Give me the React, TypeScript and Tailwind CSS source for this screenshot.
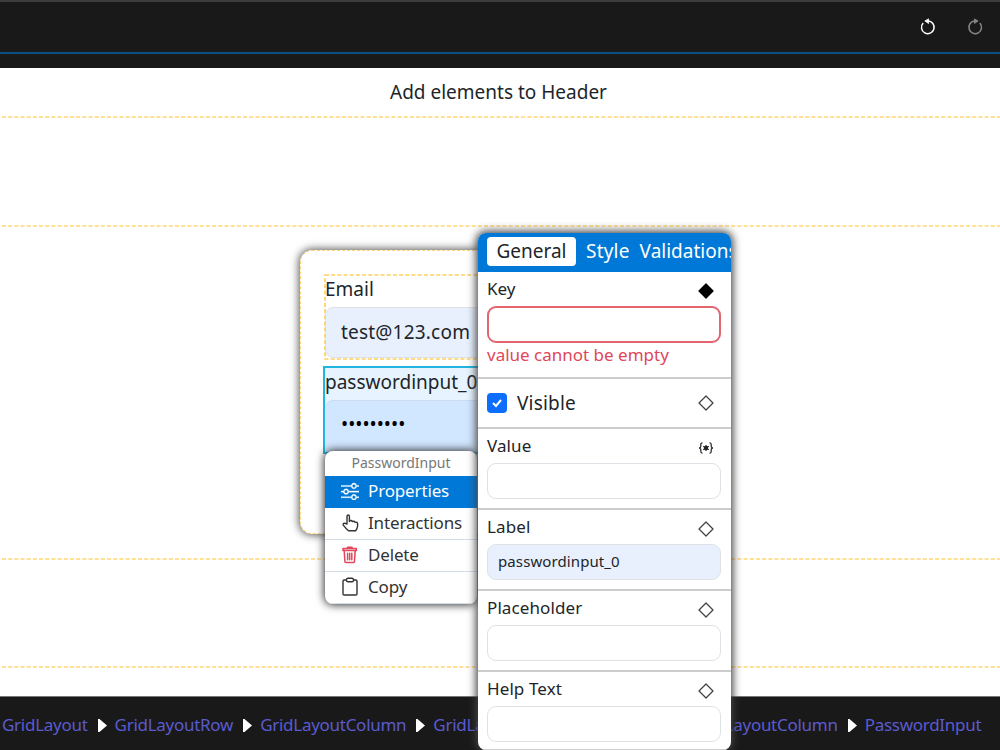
import { clsx } from 'clsx'
import { BsSliders } from 'react-icons/bs'

const Diamond = ({ filled }: { filled?: boolean }) => (
  <svg width="16" height="16" viewBox="0 0 16 16">
    <path d="M8 1 15 8 8 15 1 8Z" fill={filled ? '#000' : 'none'} stroke={filled ? '#000' : '#444'} strokeWidth="1.3" strokeLinejoin="round" />
  </svg>
)

const Expression = () => (
  <svg width="16" height="16" viewBox="0 0 16 16" fill="none" stroke="#333" strokeWidth="1.3">
    <path d="M4.5 2.8Q2.8 2.8 2.8 4.5V6.3Q2.8 8 1 8Q2.8 8 2.8 9.7V11.5Q2.8 13.2 4.5 13.2M11.5 2.8Q13.2 2.8 13.2 4.5V6.3Q13.2 8 15 8Q13.2 8 13.2 9.7V11.5Q13.2 13.2 11.5 13.2" />
    <path d="M8 5v6M5.2 6.2l5.6 3.6M5.2 9.8l5.6-3.6" strokeWidth="1.2" />
    <circle cx="8" cy="8" r="2.2" fill="#222" stroke="none" />
  </svg>
)

const Hand = () => (
  <svg width="18" height="18" viewBox="0 0 18 18" fill="none" stroke="currentColor" strokeWidth="1.4" strokeLinejoin="round" strokeLinecap="round">
    <path d="M6 10V2.5Q6 1 7.2 1T8.4 2.5V7.5V6.8Q10.6 5.8 11.2 7.5Q13.3 6.6 14 8.2Q16.6 7.8 16.6 10V12Q16.4 14.5 14.6 16.8H7.5Q5 14.8 2.3 11.2Q1.6 9.4 3.4 9.2L6 10" />
  </svg>
)

const Trash = () => (
  <svg width="18" height="18" viewBox="0 0 18 18" fill="none" stroke="#e0475a" strokeWidth="1.5" strokeLinejoin="round" strokeLinecap="round">
    <path d="M2 2.4H15.4V4.4H2ZM6.5 2.2V1.2H11V2.2" />
    <path d="M3.2 4.6 3.9 15.4Q4 16.6 5.2 16.6H12.2Q13.4 16.6 13.5 15.4L14.2 4.6M6.6 7.2V13.8M8.7 7.2V13.8M10.8 7.2V13.8" />
  </svg>
)

const Clipboard = () => (
  <svg width="18" height="20" viewBox="0 0 18 20" fill="none" stroke="currentColor" strokeWidth="1.4" strokeLinejoin="round">
    <path d="M5.5 3H3.2Q2 3 2 4.2V16.8Q2 18 3.2 18H14.8Q16 18 16 16.8V4.2Q16 3 14.8 3H12.5" />
    <path d="M5.5 3.2Q5.5 1.2 7 1.2H11Q12.5 1.2 12.5 3.2Q12.5 4.8 11 4.8H7Q5.5 4.8 5.5 3.2Z" />
  </svg>
)

function Rotate({ flipped }: { flipped?: boolean }) {
  return (
    <svg width="18" height="18" viewBox="0 0 18 18" fill="none" strokeWidth="1.5" className={clsx(flipped ? 'text-[#888] -scale-x-100' : 'text-white')}>
      <path d="M4.2 5A6.3 6.3 0 1 0 9 3" stroke="currentColor" />
      <path d="M5.8 3 9.6 0.8V5.6Z" fill="currentColor" stroke="currentColor" strokeWidth="0.7" strokeLinejoin="round" />
    </svg>
  )
}

function DashedLine() {
  return (
    <svg className="block w-full h-[2px]" height="2">
      <line x1="2" x2="1000" y1="1" y2="1" stroke="#ffd671" strokeWidth="1.7" strokeDasharray="4 2.18" />
    </svg>
  )
}

const menu = [
  { label: 'Properties', icon: <BsSliders size={18} stroke="currentColor" strokeWidth={0.3} />, active: true },
  { label: 'Interactions', icon: <Hand /> },
  { label: 'Delete', icon: <Trash /> },
  { label: 'Copy', icon: <Clipboard /> },
]

const fields = [
  { label: 'Value', value: '', expression: true, height: 'h-[81px]' },
  { label: 'Label', value: 'passwordinput_0', height: 'h-[81px]' },
  { label: 'Placeholder', value: '', height: 'h-[81px]' },
  { label: 'Help Text', value: '', height: 'h-[79px]' },
]

const crumbs = ['GridLayout', 'GridLayoutRow', 'GridLayoutColumn', 'GridLayout', 'GridLayoutRow', 'GridLayoutColumn', 'PasswordInput']

export default function App() {
  return (
    <div className="relative w-[1000px] h-[750px] overflow-hidden bg-white text-[#212529] font-['Noto_Sans',sans-serif]">
      <header className="h-[68px] bg-[#191919] border-t-2 border-[#3c3c3c]">
        <div className="h-[52px] border-b-2 border-[#095089] flex items-center justify-end gap-[29px] pr-4">
          <Rotate />
          <Rotate flipped />
        </div>
      </header>
      <main className="h-[628px] flex flex-col">
        <div className="h-12 flex justify-center items-center pr-[3px] text-[19px]">Add elements to Header</div>
        <DashedLine />
        <div className="h-[107px]" />
        <DashedLine />
        <div className="h-[331px]" />
        <DashedLine />
        <div className="h-[106px]" />
        <DashedLine />
      </main>
      <footer className="h-[54px] bg-[#191919] border-t border-[#777] flex items-center pl-[2px] pt-[3px] text-[17px] text-[#5b5bd0] whitespace-nowrap">
        {crumbs.map((c, i) => (
          <span key={i} className="flex items-center tracking-[-0.275px]">
            {i > 0 && (
              <svg width="9" height="13" viewBox="0 0 9 13" className="ml-[10px] mr-[8px]"><path d="M0 0H1.5L9 6.5 1.5 13H0Z" fill="#fff" /></svg>
            )}
            {c}
          </span>
        ))}
      </footer>

      {/* form card on the canvas */}
      <div className="absolute left-[300px] top-[250px] w-[400px] h-[284px] rounded-xl bg-white shadow-[0_0_8px_1px_#555] border border-dashed border-[#ffd671] pl-[22px] pt-[23px]">
        <div className="relative h-[86px] ml-px p-px">
          <svg className="absolute inset-0 w-full h-full">
            <rect x="1" y="1" width="380" height="84" fill="none" stroke="#ffd05e" strokeWidth="1.7" strokeDasharray="4 2.18" />
          </svg>
          <div className="text-[19px] leading-[29px]">Email</div>
          <div className="mt-[3px] h-[51px] rounded-lg border border-[#dee2e6] bg-[#e8f0fe] pl-[15px] flex items-center text-[19px] tracking-[0.2px]">test@123.com</div>
        </div>
        <div className="mt-[6px] h-[88px] border-2 border-[#1fb5de] bg-[#e7f4ff]">
          <div className="text-[19px] leading-[29px]">passwordinput_0</div>
          <div className="mt-[3px] h-[52px] rounded-t-lg border-t border-[#cbdcf0] bg-[#d1e6ff] pl-4 pb-1 flex items-center text-[19px] text-black">•••••••••</div>
        </div>
      </div>

      <div className="absolute left-[325px] top-[451px] w-[152px] h-[153px] rounded-lg overflow-hidden bg-white shadow-[0_0_8px_1px_#333]">
        <div className="h-[25px] text-center text-[14px] leading-[24px] text-[#777]">PasswordInput</div>
        {menu.map((m) => (
          <div key={m.label} className={clsx('h-8 flex items-center gap-[9px] pl-4 pb-[2px] text-[17px] tracking-[-0.15px] border-b', m.active ? 'bg-[#0078d7] text-white border-[#0078d7]' : 'border-[#d5dde6] text-[#333]')}>
            {m.icon}
            {m.label}
          </div>
        ))}
      </div>

      {/* property editor */}
      <div className="absolute left-[478px] top-[233px] w-[253px] h-[517px] rounded-lg overflow-hidden bg-white shadow-[0_0_8px_2px_#444]">
        <div className="h-[39px] bg-[#0078d7] flex items-center pl-[9px] pb-[2px] text-[19px] text-white whitespace-nowrap">
          <div className="w-[89px] h-[29px] shrink-0 rounded bg-white text-[#212529] flex items-center justify-center">General</div>
          <div className="ml-[10px] tracking-[0.2px]">Style</div>
          <div className="ml-[10px]">Validations</div>
        </div>
        <div className="h-[107px] border-b-2 border-[#ccc] pl-[9px] pr-[10px] pt-1">
          <div className="h-[30px] flex justify-between text-[17px] leading-[26px]">Key<span className="mr-[7px] mt-[7px]"><Diamond filled /></span></div>
          <div className="h-[37px] rounded-[9px] border-2 border-[#e46470]" />
          <div className="text-[17px] leading-[23px] text-[#e0475a]">value cannot be empty</div>
        </div>
        <div className="h-[50px] border-b-2 border-[#ccc] pl-[9px] pr-[10px] flex items-center text-[19px]">
          <svg width="20" height="20" viewBox="0 0 20 20"><rect width="20" height="20" rx="4" fill="#0d6efd" /><path d="m6 10 3 3 5-6" stroke="#fff" strokeWidth="2" fill="none" /></svg>
          <span className="ml-[10px] tracking-[0.2px]">Visible</span>
          <span className="ml-auto mr-[7px]"><Diamond /></span>
        </div>
        {fields.map((f) => (
          <div key={f.label} className={clsx('border-b-2 border-[#ccc] pl-[9px] pr-[10px] pt-1', f.height)}>
            <div className="h-[30px] flex justify-between text-[17px] leading-[26px] tracking-[0.1px]">
              {f.label}
              <span className="mr-[7px] mt-[7px]">{f.expression ? <Expression /> : <Diamond />}</span>
            </div>
            <div className={clsx('h-9 rounded-[9px] border border-[#dee2e6] pl-[10px] pb-px flex items-center text-[15px] tracking-[0.1px]', f.value && 'bg-[#e8f0fe]')}>{f.value}</div>
          </div>
        ))}
      </div>
    </div>
  )
}
